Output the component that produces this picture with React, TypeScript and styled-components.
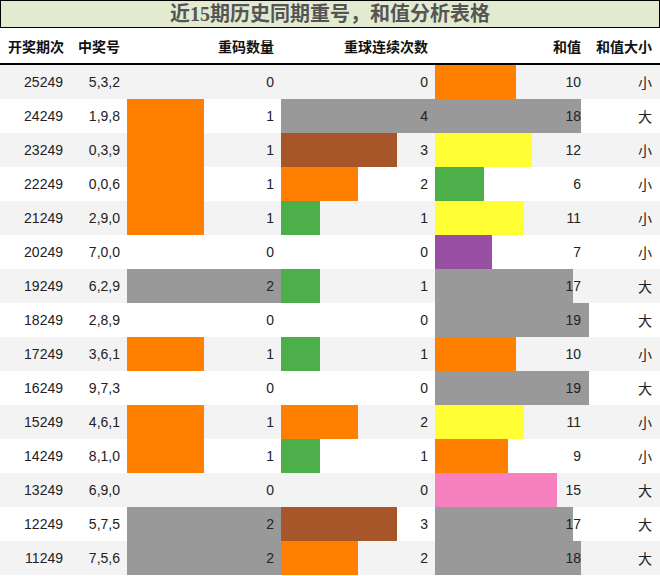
import React from 'react';
import styled, { createGlobalStyle } from 'styled-components';

const GlobalStyle = createGlobalStyle`
  body {
    margin: 0;
    background: #ffffff;
  }
`;

const Wrapper = styled.div`
  width: 660px;
  font-family: "Liberation Sans", "Noto Sans CJK SC", sans-serif;
`;

const Title = styled.div`
  height: 28px;
  box-sizing: border-box;
  border: 1px solid #000;
  background: #e2ebd0;
  color: #555;
  text-align: center;
  font-family: "Liberation Serif", "Noto Sans CJK SC", serif;
  font-weight: bold;
  font-size: 20px;
  line-height: 26px;
`;

const COLS = '69px 58px 154px 154px 154px 71px';

const HeaderRow = styled.div`
  display: grid;
  grid-template-columns: ${COLS};
  height: 37px;
  box-sizing: border-box;
  border-bottom: 2px solid #000;
`;

const HeadCell = styled.div<{ $pad: number }>`
  display: flex;
  align-items: center;
  justify-content: flex-end;
  padding-right: ${(p) => p.$pad}px;
  font-family: "Noto Sans CJK SC", sans-serif;
  font-weight: bold;
  font-size: 14px;
  color: #111;
`;

const Row = styled.div<{ $odd: boolean }>`
  display: grid;
  grid-template-columns: ${COLS};
  height: 34px;
  background: ${(p) => (p.$odd ? '#f3f3f3' : '#ffffff')};
`;

const Cell = styled.div<{ $pad: number }>`
  position: relative;
  display: flex;
  align-items: center;
  justify-content: flex-end;
  padding-right: ${(p) => p.$pad}px;
  font-size: 14px;
  color: #222;
`;

const CellText = styled.span`
  position: relative;
  z-index: 1;
`;

const Bar = styled.div<{ $color: string }>`
  position: absolute;
  left: 0;
  top: 0;
  bottom: 0;
  background: ${(p) => p.$color};
`;

const ORANGE = '#ff7f00';
const GRAY = '#999999';
const GREEN = '#4daf4a';
const BROWN = '#a65628';
const YELLOW = '#ffff33';
const PURPLE = '#984ea3';
const PINK = '#f781bf';

const repeatColor: Record<number, string> = { 1: ORANGE, 2: GRAY };
const streakColor: Record<number, string> = { 1: GREEN, 2: ORANGE, 3: BROWN, 4: GRAY };

const sumColor = (v: number) => {
  if (v <= 6) return GREEN;
  if (v <= 8) return PURPLE;
  if (v <= 10) return ORANGE;
  if (v <= 12) return YELLOW;
  if (v <= 15) return PINK;
  return GRAY;
};

type Draw = [string, string, number, number, number];

const draws: Draw[] = [
  ['25249', '5,3,2', 0, 0, 10],
  ['24249', '1,9,8', 1, 4, 18],
  ['23249', '0,3,9', 1, 3, 12],
  ['22249', '0,0,6', 1, 2, 6],
  ['21249', '2,9,0', 1, 1, 11],
  ['20249', '7,0,0', 0, 0, 7],
  ['19249', '6,2,9', 2, 1, 17],
  ['18249', '2,8,9', 0, 0, 19],
  ['17249', '3,6,1', 1, 1, 10],
  ['16249', '9,7,3', 0, 0, 19],
  ['15249', '4,6,1', 1, 2, 11],
  ['14249', '8,1,0', 1, 1, 9],
  ['13249', '6,9,0', 0, 0, 15],
  ['12249', '5,7,5', 2, 3, 17],
  ['11249', '7,5,6', 2, 2, 18],
];

const BAR_W = 154;

const BarCell: React.FC<{ value: number; max: number; color?: string; pad: number }> = ({ value, max, color, pad }) => (
  <Cell $pad={pad}>
    {value > 0 && color && <Bar $color={color} style={{ width: Math.round((BAR_W * value) / max) }} />}
    <CellText>{value}</CellText>
  </Cell>
);

const App: React.FC = () => {
  return (
    <Wrapper>
      <GlobalStyle />
      <Title>近15期历史同期重号，和值分析表格</Title>
      <HeaderRow>
        <HeadCell $pad={5}>开奖期次</HeadCell>
        <HeadCell $pad={7}>中奖号</HeadCell>
        <HeadCell $pad={7}>重码数量</HeadCell>
        <HeadCell $pad={7}>重球连续次数</HeadCell>
        <HeadCell $pad={8}>和值</HeadCell>
        <HeadCell $pad={8}>和值大小</HeadCell>
      </HeaderRow>
      {draws.map(([issue, nums, rep, streak, sum], i) => (
        <Row key={issue} $odd={i % 2 === 0}>
          <Cell $pad={6}>{issue}</Cell>
          <Cell $pad={7}>{nums}</Cell>
          <BarCell value={rep} max={2} color={repeatColor[rep]} pad={7} />
          <BarCell value={streak} max={4} color={streakColor[streak]} pad={7} />
          <BarCell value={sum} max={19} color={sumColor(sum)} pad={8} />
          <Cell $pad={8}>
            <CellText>{sum >= 14 ? '大' : '小'}</CellText>
          </Cell>
        </Row>
      ))}
    </Wrapper>
  );
};

export default App;
